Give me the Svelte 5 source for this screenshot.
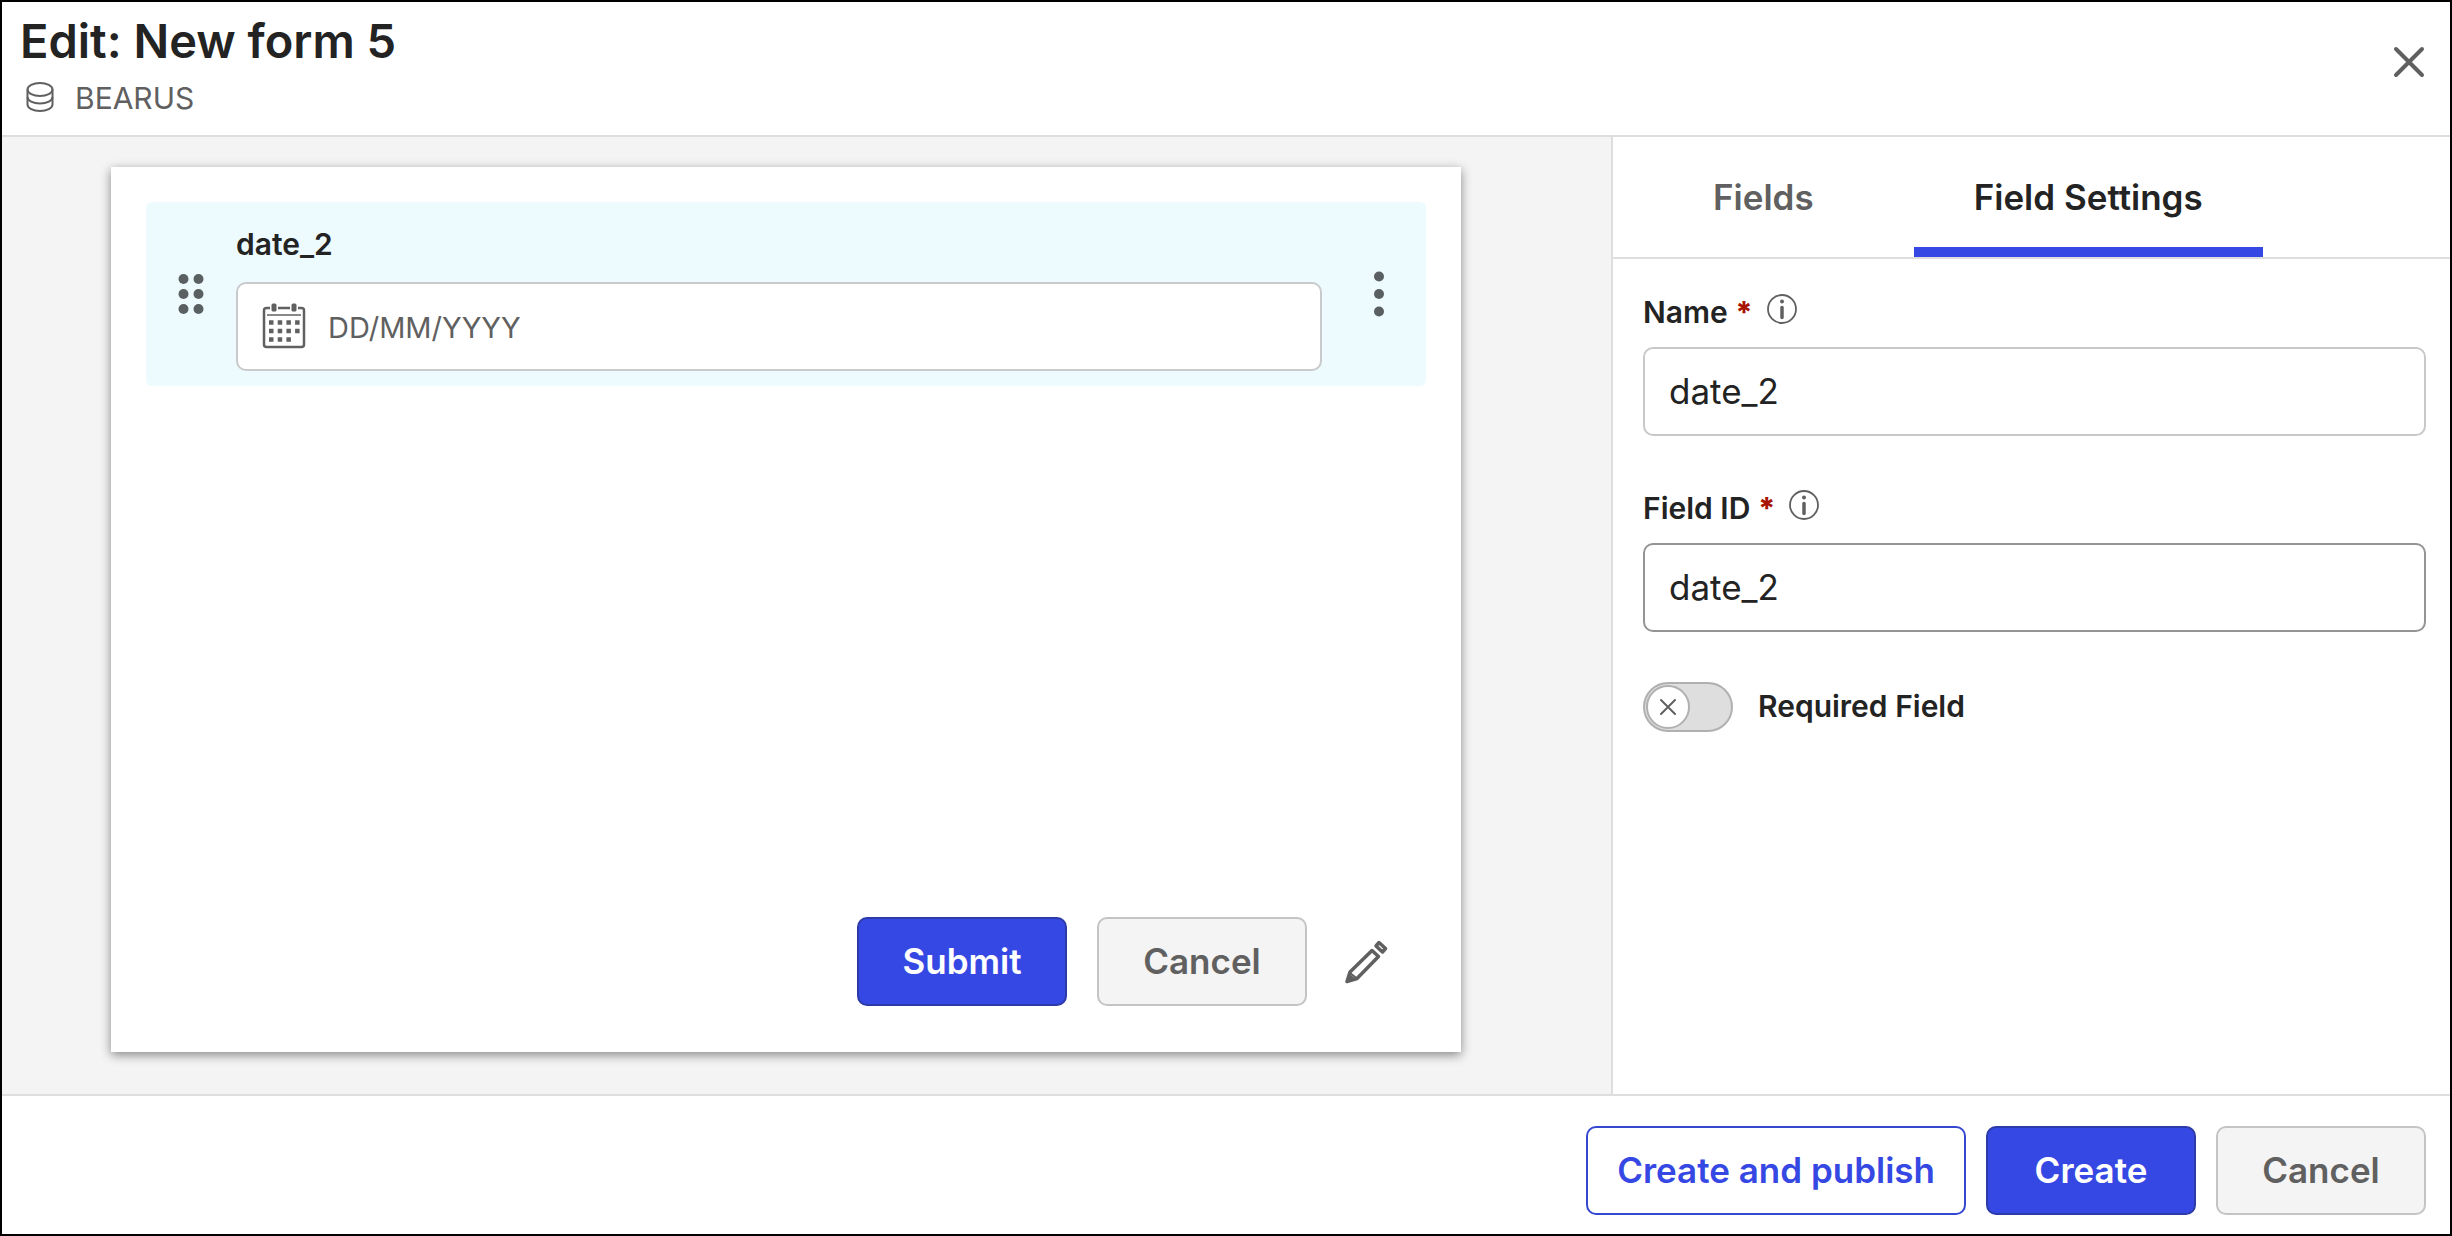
<script>
    export let title = "Edit: New form 5";
    export let source = "BEARUS";

    let activeTab = "settings";
    let required = false;
    let name = "date_2";
    let fieldId = "date_2";

    const tabs = [
        { id: "fields", label: "Fields" },
        { id: "settings", label: "Field Settings" },
    ];
</script>

<style>
    :global(html),
    :global(body),
    :global(#app) {
        height: 100%;
    }

    :global(body) {
        margin: 0;
    }

    .dialog,
    .dialog * {
        box-sizing: border-box;
    }

    .dialog {
        display: flex;
        flex-direction: column;
        min-height: 100%;
        border: 2px solid #000;
        background: #fff;
        color: #232323;
        font-family: Inter, "Liberation Sans", sans-serif;
        font-size: 30px;
        line-height: 36px;
    }

    button,
    input {
        margin: 0;
        font-family: inherit;
    }

    button {
        cursor: pointer;
    }

    svg {
        display: block;
        flex: none;
    }

    header {
        display: flex;
        justify-content: space-between;
        align-items: center;
        height: 135px;
        padding: 0 24px 0 18px;
        border-bottom: 2px solid #dedede;
    }

    h1 {
        margin: 0;
        font-size: 47px;
        line-height: 60px;
        font-weight: 600;
    }

    .source {
        display: flex;
        align-items: center;
        gap: 19px;
        margin: 0 0 11px;
        padding: 9px 0 0 4px;
        color: #606060;
    }

    .icon-button {
        padding: 0;
        border: 0;
        background: none;
        color: #606060;
    }

    .close {
        margin-bottom: 14px;
    }

    main {
        display: grid;
        grid-template-columns: minmax(0, 1609fr) minmax(0, 839fr);
        flex: 1;
    }

    .canvas {
        display: flex;
        padding: 30px 150px 42px 109px;
        background: #f4f4f4;
    }

    .form {
        display: flex;
        flex: 1;
        flex-direction: column;
        justify-content: space-between;
        padding: 35px;
        background: #fff;
        box-shadow: 0 3px 10px rgba(0, 0, 0, 0.45);
    }

    .field {
        display: flex;
        align-items: center;
        height: 184px;
        padding: 0 42px 0 32px;
        border-radius: 6px;
        background: #edfbff;
    }

    .field .icon-button {
        color: #5a6062;
    }

    .field-body {
        display: flex;
        flex: 1;
        flex-direction: column;
        gap: 20px;
        margin: 8px 52px 0 32px;
    }

    label {
        font-weight: 600;
    }

    .date-box {
        display: flex;
        align-items: center;
        gap: 22px;
        height: 89px;
        padding: 0 24px;
        border: 2px solid #c8cacb;
        border-radius: 10px;
        background: #fff;
        color: #606060;
    }

    .date-box input {
        flex: 1;
        min-width: 0;
        padding: 2px 0 0;
        border: 0;
        outline: 0;
        background: none;
        font-size: 29px;
    }

    .date-box input::placeholder {
        color: #606060;
        opacity: 1;
    }

    .form-actions {
        display: flex;
        justify-content: flex-end;
        align-items: center;
        gap: 30px;
        padding: 0 36px 11px 0;
    }

    .edit {
        margin-left: 7px;
    }

    .btn {
        min-width: 210px;
        height: 89px;
        padding: 0 29px 2px;
        border: 2px solid #c4c4c4;
        border-radius: 10px;
        background: #f4f4f4;
        color: #606060;
        font-size: 35px;
        font-weight: 600;
    }

    .btn.primary {
        border-color: #2c3ba8;
        background: #3648e3;
        color: #fff;
    }

    .btn.outline {
        border-color: #3648d0;
        background: #fff;
        color: #3648e3;
    }

    .panel {
        border-left: 2px solid #dedede;
    }

    .tabs {
        display: flex;
        gap: 40px;
        height: 122px;
        padding-left: 40px;
        border-bottom: 2px solid #dedede;
    }

    .tab {
        padding: 10px 60px 0;
        border: 0;
        border-bottom: 10px solid transparent;
        background: none;
        color: #606060;
        font-size: 35px;
        font-weight: 600;
    }

    .tab.active {
        border-bottom-color: #3648e3;
        color: #232323;
    }

    .settings {
        display: flex;
        flex-direction: column;
        gap: 50px;
        padding: 31px 24px 31px 30px;
    }

    .label-row {
        display: flex;
        align-items: center;
        height: 44px;
        margin-bottom: 13px;
    }

    .star {
        color: #a81400;
        font-weight: 800;
    }

    .label-row .icon-button {
        margin-left: 14px;
        padding-bottom: 6px;
    }

    .text-box {
        display: block;
        width: 100%;
        height: 89px;
        padding: 0 24px 2px;
        border: 2px solid #c8c8c8;
        border-radius: 10px;
        outline: 0;
        background: #fff;
        color: #232323;
        font-size: 35px;
    }

    .text-box.hover {
        border-color: #949494;
    }

    .toggle-row {
        display: flex;
        align-items: center;
        gap: 25px;
    }

    .toggle-row label {
        padding-bottom: 2px;
    }

    .toggle {
        position: relative;
        width: 90px;
        height: 50px;
    }

    .toggle input {
        position: absolute;
        inset: 0;
        width: 100%;
        height: 100%;
        border: 2px solid #b0b0b0;
        border-radius: 25px;
        background: #dedede;
        appearance: none;
    }

    .toggle svg {
        position: absolute;
        top: 3px;
        left: 3px;
        pointer-events: none;
    }

    .toggle input:checked {
        background: #3648e3;
    }

    .toggle input:checked + svg {
        left: 43px;
    }

    footer {
        display: flex;
        justify-content: flex-end;
        gap: 20px;
        padding: 30px 24px 19px;
        border-top: 2px solid #dedede;
    }
</style>

<div class="dialog">
    <header>
        <div>
            <h1>{title}</h1>
            <p class="source">
                <svg width="32" height="32" viewBox="0 0 32 32" fill="none" stroke="currentColor" stroke-width="2">
                    <ellipse cx="16" cy="7.500" rx="12.500" ry="6.500" />
                    <path d="M3.500 7.500v15c0 3.500 5.500 6.500 12.500 6.500s12.500-3 12.500-6.500v-15" />
                    <path d="M3.500 15c0 3.500 5.500 6.500 12.500 6.500s12.500-3 12.500-6.500" />
                </svg>
                {source}
            </p>
        </div>
        <button class="icon-button close" aria-label="Close">
            <svg width="34" height="34" viewBox="0 0 34 34" stroke="currentColor" stroke-width="4" stroke-linecap="round">
                <path d="M4 4l26 26M30 4L4 30" />
            </svg>
        </button>
    </header>

    <main>
        <section class="canvas">
            <div class="form">
                <div class="field">
                    <button class="icon-button" aria-label="Move field">
                        <svg width="26" height="40" viewBox="0 0 26 40" fill="currentColor">
                            {#each [5, 20, 35] as y}
                                <circle cx="5.500" cy={y} r="5" />
                                <circle cx="20.500" cy={y} r="5" />
                            {/each}
                        </svg>
                    </button>
                    <div class="field-body">
                        <label for="date">{name}</label>
                        <div class="date-box">
                            <svg width="44" height="46" viewBox="0 0 44 46">
                                <path
                                    d="M8 5H4.500Q2 5 2 7.500v34Q2 44 4.500 44h35q2.500 0 2.500-2.500v-34Q42 5 39.500 5H36M16 5h12"
                                    fill="none"
                                    stroke="currentColor"
                                    stroke-width="2.500"
                                />
                                <path d="M5 12h34" stroke="currentColor" stroke-width="1.500" />
                                <rect x="9.500" y="0.500" width="5" height="8" rx="1.500" fill="currentColor" />
                                <rect x="29.500" y="0.500" width="5" height="8" rx="1.500" fill="currentColor" />
                                <path
                                    d="M7 19.500h31M7 28h31M7 36.500h23"
                                    stroke="currentColor"
                                    stroke-width="4.500"
                                    stroke-dasharray="4.500 4.200"
                                />
                            </svg>
                            <input id="date" type="text" placeholder="DD/MM/YYYY" />
                        </div>
                    </div>
                    <button class="icon-button" aria-label="Field actions">
                        <svg width="10" height="46" viewBox="0 0 10 46" fill="currentColor">
                            <circle cx="5" cy="5.500" r="5" />
                            <circle cx="5" cy="23" r="5" />
                            <circle cx="5" cy="40.500" r="5" />
                        </svg>
                    </button>
                </div>

                <div class="form-actions">
                    <button class="btn primary">Submit</button>
                    <button class="btn">Cancel</button>
                    <button class="icon-button edit" aria-label="Edit buttons">
                        <svg width="46" height="46" viewBox="0 0 46 46" fill="none" stroke="currentColor" stroke-width="3.500" stroke-linejoin="round">
                            <path d="M3 42.500L6 33 28 11.500l6.500 6L13 39.500z" />
                            <path d="M35 3.500l6.500 6-3 3.500-6.500-6z" />
                            <path d="M3 42.500l2-7 5 4.500z" fill="currentColor" stroke-width="2" />
                            <path d="M6 34l7 5.500" stroke-width="2" />
                        </svg>
                    </button>
                </div>
            </div>
        </section>

        <aside class="panel">
            <nav class="tabs">
                {#each tabs as tab}
                    <button
                        class="tab"
                        class:active={activeTab === tab.id}
                        on:click={() => (activeTab = tab.id)}
                    >{tab.label}</button>
                {/each}
            </nav>

            <div class="settings">
                <div>
                    <div class="label-row">
                        <label for="name">Name <span class="star">*</span></label>
                        <button class="icon-button" aria-label="About name">
                            <svg width="30" height="30" viewBox="0 0 30 30" fill="none" stroke="currentColor">
                                <circle cx="15" cy="15" r="14" stroke-width="1.800" />
                                <path d="M15 13.500v10" stroke-width="3.500" stroke-linecap="round" />
                                <circle cx="15" cy="7.500" r="2" fill="currentColor" stroke="none" />
                            </svg>
                        </button>
                    </div>
                    <input class="text-box" id="name" type="text" bind:value={name} />
                </div>

                <div>
                    <div class="label-row">
                        <label for="field-id">Field ID <span class="star">*</span></label>
                        <button class="icon-button" aria-label="About field ID">
                            <svg width="30" height="30" viewBox="0 0 30 30" fill="none" stroke="currentColor">
                                <circle cx="15" cy="15" r="14" stroke-width="1.800" />
                                <path d="M15 13.500v10" stroke-width="3.500" stroke-linecap="round" />
                                <circle cx="15" cy="7.500" r="2" fill="currentColor" stroke="none" />
                            </svg>
                        </button>
                    </div>
                    <input class="text-box hover" id="field-id" type="text" bind:value={fieldId} />
                </div>

                <div class="toggle-row">
                    <div class="toggle">
                        <input id="required" type="checkbox" role="switch" bind:checked={required} />
                        <svg width="44" height="44" viewBox="0 0 44 44" fill="none">
                            <circle cx="22" cy="22" r="21" fill="#fff" stroke="#b0b0b0" stroke-width="2" />
                            <path d="M15 15l14 14M29 15L15 29" stroke="#606060" stroke-width="2" stroke-linecap="round" />
                        </svg>
                    </div>
                    <label for="required">Required Field</label>
                </div>
            </div>
        </aside>
    </main>

    <footer>
        <button class="btn outline">Create and publish</button>
        <button class="btn primary">Create</button>
        <button class="btn">Cancel</button>
    </footer>
</div>
